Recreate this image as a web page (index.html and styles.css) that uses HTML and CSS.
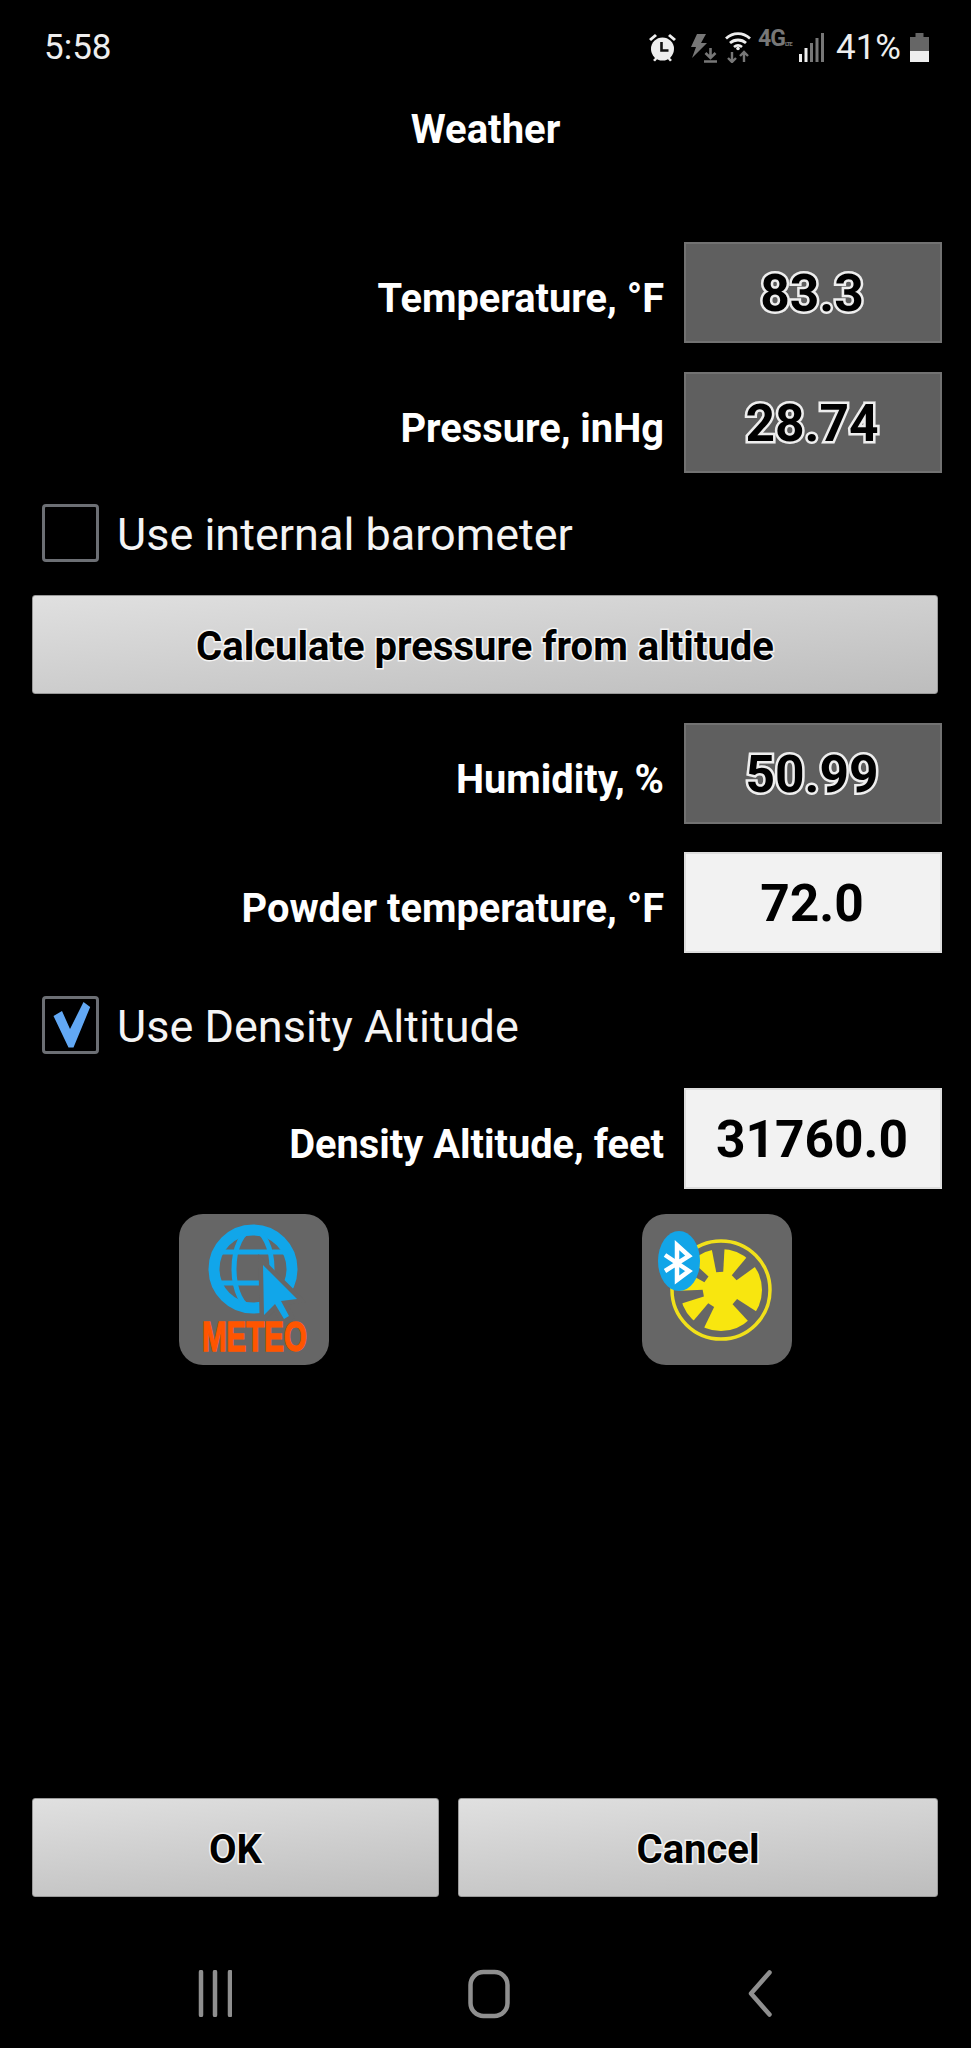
FILE: index.html
```html
<!DOCTYPE html>
<html lang="en">
<head>
  <meta charset="UTF-8" />
  <meta name="viewport" content="width=device-width, initial-scale=1.0"/>
  <title>Weather</title>
  <link rel="stylesheet" href="styles.css">
</head>
<body>
<div class="page">

  <div class="status-bar">
    <span class="clock">5:58</span>
    <div class="status-icons">
      <svg class="ic-alarm" width="29" height="29" viewBox="0 0 29 29">
        <circle cx="14.5" cy="16" r="11.5" fill="#eee"/>
        <path d="M13.5 9v8.5h7" fill="none" stroke="#111" stroke-width="2.6"/>
        <path d="M1 6l6-5 2 2-6 5zM28 6l-6-5-2 2 6 5z" fill="#eee"/>
        <path d="M5 27l3-3 2 1-3 3.500zM24 27l-3-3-2 1 3 3.500z" fill="#eee"/>
      </svg>
      <svg class="ic-charge" width="30" height="29" viewBox="0 0 30 29">
        <path d="M10 0h9l-5 9h6L5 24l4-11H4z" fill="#777"/>
        <path d="M23.500 14v10M18.500 19l5 5 5-5M17 27.500h13" fill="none" stroke="#777" stroke-width="2.6"/>
      </svg>
      <svg class="ic-wifi" width="26" height="32" viewBox="0 0 26 32">
        <path d="M1 7.500c7-6.500 17-6.500 24 0M5 12c4.500-4 11.500-4 16 0M9 16c2.500-2 5.500-2 8 0" fill="none" stroke="#eee" stroke-width="2.800"/>
        <circle cx="13" cy="17.500" r="1.800" fill="#eee"/>
        <path d="M7 21v10M3 27l4 4 4-4M19 31V21M15 25l4-4 4 4" fill="none" stroke="#777" stroke-width="2.400"/>
      </svg>
      <span class="net-type">4G<small>LTE</small></span>
      <svg class="ic-signal" width="25" height="29" viewBox="0 0 25 29">
        <rect x="0" y="21" width="3" height="8" fill="#eee"/>
        <rect x="5.500" y="15" width="3" height="14" fill="#eee"/>
        <rect x="11" y="10" width="3" height="19" fill="#777"/>
        <rect x="16.500" y="5" width="3" height="24" fill="#777"/>
        <rect x="22" y="0" width="3" height="29" fill="#777"/>
      </svg>
      <span class="battery-pct">41%</span>
      <svg class="ic-battery" width="19" height="29" viewBox="0 0 19 29">
        <path d="M5.500 0h8v4h-8z" fill="#666"/>
        <rect x="0" y="4" width="19" height="14" fill="#666"/>
        <rect x="0" y="18" width="19" height="11" fill="#eee"/>
      </svg>
    </div>
  </div>

  <h1 class="title">Weather</h1>

  <div class="field-row first-row">
    <label class="field-label">Temperature, °F</label>
    <div class="value value-auto">83.3</div>
  </div>
  <div class="field-row pressure-row">
    <label class="field-label">Pressure, inHg</label>
    <div class="value value-auto">28.74</div>
  </div>

  <div class="check-row baro-row">
    <span class="check-box"></span>
    <span class="check-label">Use internal barometer</span>
  </div>

  <button class="btn btn-calc"><span>Calculate pressure from altitude</span></button>

  <div class="field-row humidity-row">
    <label class="field-label">Humidity, %</label>
    <div class="value value-auto">50.99</div>
  </div>
  <div class="field-row powder-row">
    <label class="field-label">Powder temperature, °F</label>
    <div class="value">72.0</div>
  </div>

  <div class="check-row density-check">
    <span class="check-box">
      <svg width="51" height="52" viewBox="0 0 51 52">
        <path d="M8.500 17L17 12l8 18 13.500-27 6.700 5-16.700 40.500h-5z" fill="#62a8f4"/>
      </svg>
    </span>
    <span class="check-label">Use Density Altitude</span>
  </div>

  <div class="field-row density-row">
    <label class="field-label">Density Altitude, feet</label>
    <div class="value">31760.0</div>
  </div>

  <div class="tool-row">
    <div class="tool-icon">
      <svg width="150" height="151" viewBox="0 0 150 151">
        <g fill="none" stroke="#11a6ea">
          <circle cx="74" cy="55" r="39" stroke-width="11"/>
          <ellipse cx="74" cy="55" rx="19" ry="39" stroke-width="5"/>
          <path d="M38 38h72M38 69h72" stroke-width="5"/>
        </g>
        <path d="M84 51l34 34-16 2 8 15-5 3-9-15-11 11z" fill="#11a6ea" stroke="#666" stroke-width="9" paint-order="stroke"/>
        <text class="meteo-text" transform="translate(23 137) scale(.820 1.200)">METEO</text>
      </svg>
    </div>
    <div class="tool-icon">
      <svg width="150" height="151" viewBox="0 0 150 151">
        <circle cx="79" cy="76" r="41" fill="#f8e60f"/>
        <g fill="#666">
          <polygon points="75.500,58 82.500,58 86,30 72,30" transform="rotate(-4 79 76)"/>
          <polygon points="75.500,58 82.500,58 86,30 72,30" transform="rotate(47 79 76)"/>
          <polygon points="75.500,58 82.500,58 86,30 72,30" transform="rotate(130 79 76)"/>
          <polygon points="75.500,58 82.500,58 86,30 72,30" transform="rotate(213 79 76)"/>
          <polygon points="75.500,58 82.500,58 86,30 72,30" transform="rotate(260 79 76)"/>
          <polygon points="75.500,58 82.500,58 86,30 72,30" transform="rotate(306 79 76)"/>
        </g>
        <circle cx="79" cy="76" r="49" fill="none" stroke="#f1e01a" stroke-width="3.500"/>
        <ellipse cx="37" cy="47" rx="21" ry="30" fill="#12a5e8"/>
        <path d="M23 41l24 16-12 9V31l12 11-24 15" fill="none" stroke="#fff" stroke-width="4.500"/>
      </svg>
    </div>
  </div>

  <div class="action-row">
    <button class="btn btn-ok"><span>OK</span></button>
    <button class="btn btn-cancel"><span>Cancel</span></button>
  </div>

  <div class="nav-bar">
    <svg class="nav-recent" width="34" height="47" viewBox="0 0 34 47">
      <path d="M3 2v43M17 2v43M32 2v43" stroke="#8f8f8f" stroke-width="4.500" stroke-linecap="round"/>
    </svg>
    <svg class="nav-home" width="42" height="50" viewBox="0 0 42 50">
      <rect x="2.500" y="3" width="37" height="44" rx="13" fill="none" stroke="#8f8f8f" stroke-width="4.500"/>
    </svg>
    <svg class="nav-back" width="24" height="47" viewBox="0 0 24 47">
      <path d="M21.500 2.500L3 23.500l18.500 21" fill="none" stroke="#8f8f8f" stroke-width="4.500" stroke-linecap="round" stroke-linejoin="round"/>
    </svg>
  </div>

</div>
</body>
</html>
```

FILE: styles.css
```css
* {
  box-sizing: border-box;
}
body {
  margin: 0;
  background-color: #000;
  font-family: Roboto, "Liberation Sans", sans-serif;
  color: #fff;
}
.page {
  width: 971px;
  height: 2048px;
  display: flex;
  flex-direction: column;
  overflow: hidden;
}

/* status bar */
.status-bar {
  height: 94px;
  display: flex;
  align-items: center;
  justify-content: space-between;
  padding: 0 42px 0 44px;
}
.clock {
  font-size: 35px;
  color: #eee;
}
.status-icons {
  display: flex;
  align-items: center;
}
.ic-charge {
  margin: 2px 0 0 10px;
}
.ic-wifi {
  margin: 0 0 0 8px;
}
.net-type {
  width: 36px;
  margin: -12px 0 0 7px;
  font-size: 23px;
  font-weight: 700;
  line-height: 22px;
  letter-spacing: -1px;
  color: #777;
  white-space: nowrap;
}
.net-type small {
  font-size: 6px;
}
.ic-signal {
  margin-left: 5px;
}
.battery-pct {
  width: 65px;
  margin-left: 12px;
  font-size: 35px;
  color: #eee;
}
.ic-battery {
  margin-left: 9px;
}

.title {
  height: 70px;
  margin: 0;
  font-size: 40px;
  font-weight: 700;
  line-height: 72px;
  text-align: center;
}

/* label + value rows */
.field-row {
  display: flex;
  align-items: center;
  justify-content: flex-end;
  gap: 20px;
  padding-right: 29px;
}
.field-label {
  padding-top: 12px;
  font-size: 39.8px;
  font-weight: 700;
}
.value {
  width: 258px;
  height: 101px;
  display: flex;
  align-items: center;
  justify-content: center;
  padding: 2px 2px 0 0;
  background-color: #f2f2f2;
  border: 2px solid #ddd;
  font-size: 51.5px;
  font-weight: 700;
  color: #000;
}
.value-auto {
  background-color: #5f5f5f;
  border-color: #727272;
  -webkit-text-stroke: 5px #eee;
  paint-order: stroke fill;
}
.first-row {
  margin-top: 78px;
}
.pressure-row {
  margin-top: 29px;
}
.humidity-row {
  margin-top: 29px;
}
.powder-row {
  margin-top: 28px;
}
.density-row {
  margin-top: 34px;
}

/* checkboxes */
.check-row {
  display: flex;
  align-items: center;
  gap: 18px;
  padding-left: 42px;
}
.check-box {
  width: 57px;
  height: 58px;
  display: flex;
  align-items: center;
  justify-content: center;
  border: 3px solid #6c6f74;
  border-radius: 4px;
}
.check-label {
  padding-top: 2px;
  font-size: 45px;
  color: #f4f4f4;
}
.baro-row {
  margin-top: 31px;
}
.density-check {
  margin-top: 43px;
}

/* buttons */
.btn {
  height: 99px;
  padding: 3px 0 0;
  background: linear-gradient(175deg, #e0e0e0, #bdbdbd);
  border: 1px solid #999;
  border-radius: 3px;
  font-family: inherit;
  font-size: 40px;
  font-weight: 700;
  color: #000;
  -webkit-text-stroke: 3px #f4f4f4;
  paint-order: stroke fill;
}
.btn-calc {
  width: 906px;
  margin: 33px 0 0 32px;
}
.action-row {
  display: flex;
  gap: 19px;
  margin-top: auto;
  padding-left: 32px;
}
.btn-ok {
  width: 407px;
}
.btn-cancel {
  width: 480px;
}

/* meteo / bluetooth tools */
.tool-row {
  display: flex;
  gap: 313px;
  margin-top: 25px;
  padding-left: 179px;
}
.tool-icon {
  width: 150px;
  height: 151px;
  background-color: #666;
  border-radius: 24px;
  overflow: hidden;
}
.tool-icon svg {
  display: block;
}
.meteo-text {
  font-family: "Liberation Sans", sans-serif;
  font-size: 36px;
  font-weight: 700;
  fill: #ff5500;
  stroke: #ff5500;
  stroke-width: 1.2px;
}

/* bottom navigation */
.nav-bar {
  height: 151px;
  display: flex;
  align-items: center;
  padding: 42px 0 0 198px;
}
.nav-bar svg {
  display: block;
}
.nav-home {
  margin-left: 236px;
}
.nav-back {
  margin-left: 238px;
}
```
